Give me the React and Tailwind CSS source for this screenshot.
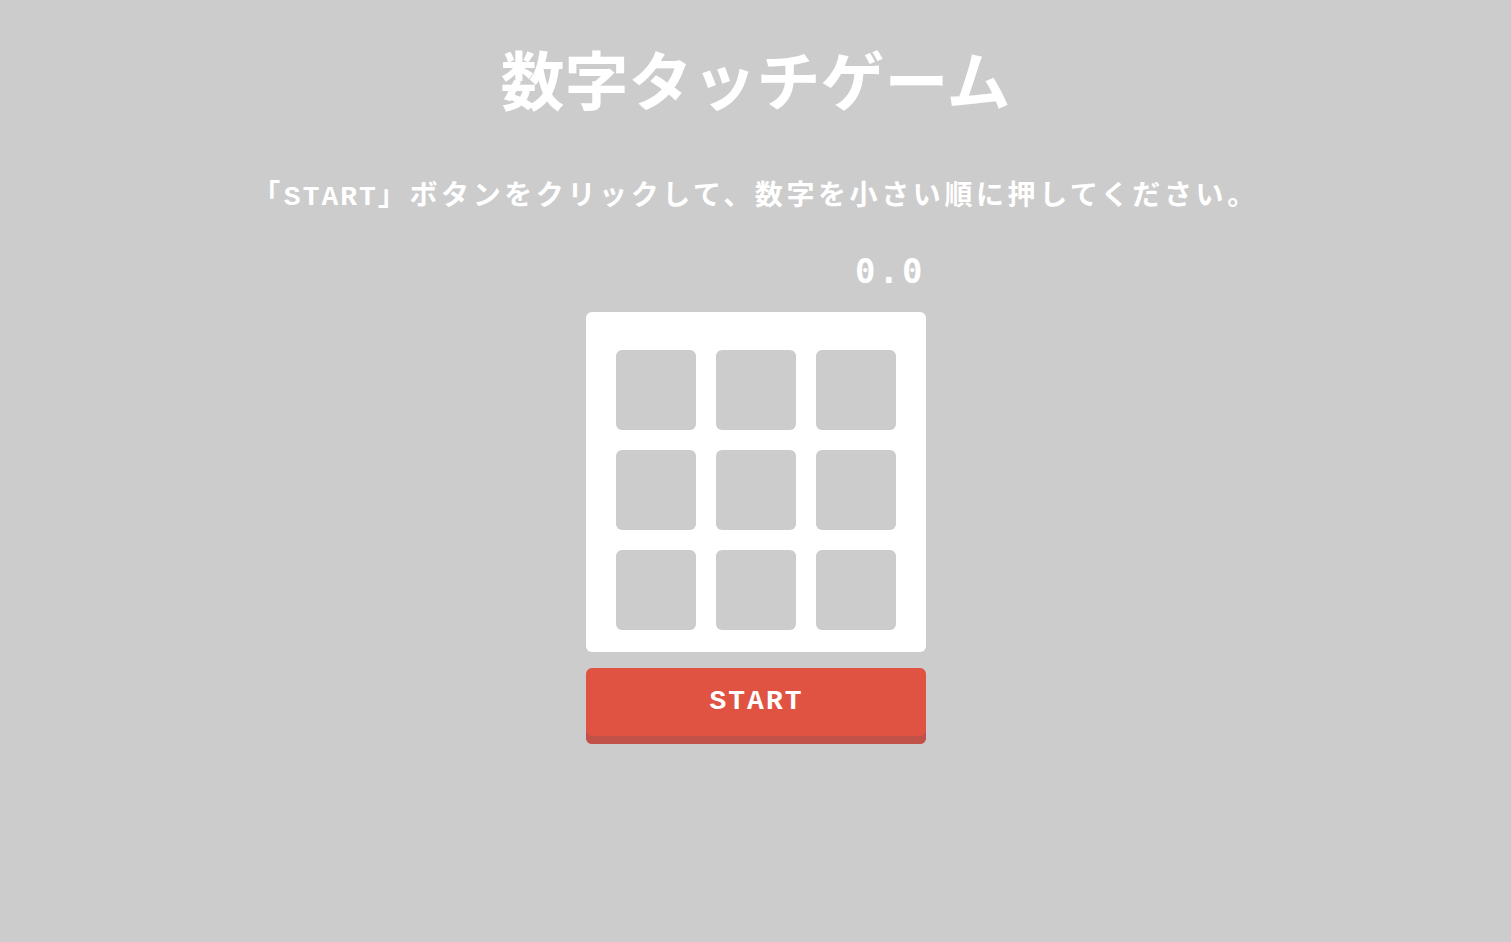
export default function App() {
  const cells = Array.from({ length: 9 });
  return (
    <div className="min-h-[942px] w-full bg-[#cccccc] flex flex-col items-center text-white font-[family-name:'Noto_Sans_CJK_JP',sans-serif]">
      <h1 className="mt-[45px] h-[64px] text-[64px] leading-[64px] font-bold">
        数字タッチゲーム
      </h1>
      <p className="mt-[70px] h-[28px] text-[28px] leading-[28px] font-bold tracking-[3.6px]">
        「<span className="font-[family-name:'Liberation_Mono',monospace] tracking-[2px]">START</span>」ボタンをクリックして、数字を小さい順に押してください。
      </p>
      <div className="mt-[47px] w-[340px] text-right h-[34px] text-[34px] leading-[34px] font-bold tracking-[3px] font-[family-name:'DejaVu_Sans_Mono',monospace]">
        0.0
      </div>
      <div className="mt-[24px] w-[340px] h-[340px] bg-white rounded-[6px] px-[30px] pt-[38px] pb-[22px] grid grid-cols-3 gap-[20px]">
        {cells.map((_, i) => (
          <div key={i} className="w-[80px] h-[80px] rounded-[6px] bg-[#cccccc]" />
        ))}
      </div>
      <button className="mt-[16px] w-[340px] h-[76px] rounded-[6px] bg-[#e05343] shadow-[inset_0_-8px_0_#c0524a] pb-[8px] pl-[2px] text-[28px] tracking-[2px] font-bold font-[family-name:'Liberation_Mono',monospace] text-white">
        START
      </button>
    </div>
  );
}
